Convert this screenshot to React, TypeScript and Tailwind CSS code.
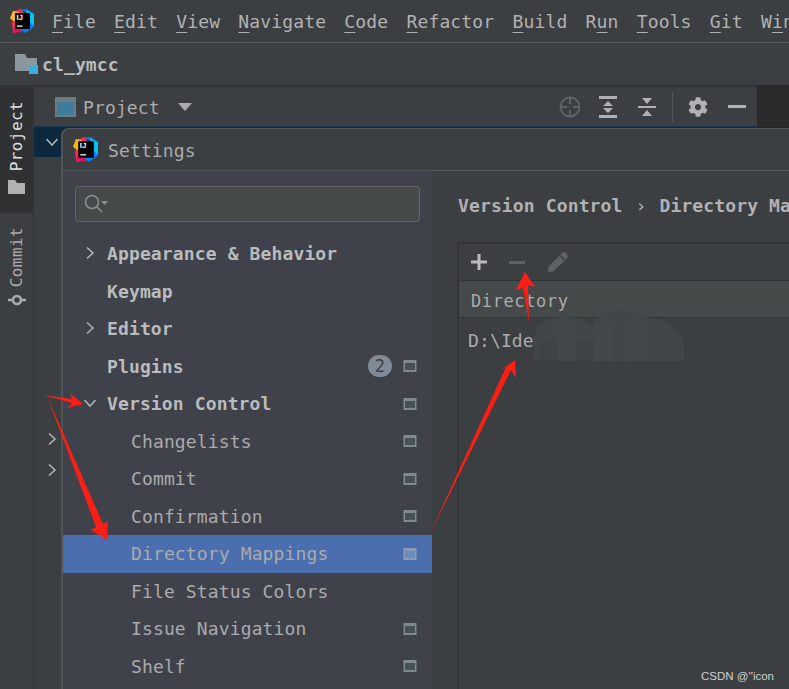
import { FaCog, FaPen } from "react-icons/fa";

const mono = "font-['DejaVu_Sans_Mono',monospace]";

const menus = [
  { label: "File", key: 0 },
  { label: "Edit", key: 0 },
  { label: "View", key: 0 },
  { label: "Navigate", key: 0 },
  { label: "Code", key: 0 },
  { label: "Refactor", key: 0 },
  { label: "Build", key: 0 },
  { label: "Run", key: 1 },
  { label: "Tools", key: 0 },
  { label: "Git", key: 0 },
  { label: "Window", key: 1 },
];

type Row = {
  label: string;
  level: 0 | 1;
  arrow?: "right" | "down";
  badge?: string;
  page?: boolean;
  selected?: boolean;
};

const rows: Row[] = [
  { label: "Appearance & Behavior", level: 0, arrow: "right" },
  { label: "Keymap", level: 0 },
  { label: "Editor", level: 0, arrow: "right" },
  { label: "Plugins", level: 0, badge: "2", page: true },
  { label: "Version Control", level: 0, arrow: "down", page: true },
  { label: "Changelists", level: 1, page: true },
  { label: "Commit", level: 1, page: true },
  { label: "Confirmation", level: 1, page: true },
  { label: "Directory Mappings", level: 1, page: true, selected: true },
  { label: "File Status Colors", level: 1 },
  { label: "Issue Navigation", level: 1, page: true },
  { label: "Shelf", level: 1, page: true },
];

const IdeaLogo = ({ size }: { size: number }) => (
  <svg width={size} height={size} viewBox="0 0 24 24" className="shrink-0">
    <polygon points="9,1 17,0 24,5 24,18 15,24 10,20 18,3" fill="#087cfa" />
    <polygon points="16,1 24,5 24,17 19,12" fill="#07c3f2" />
    <polygon points="2,3 11,0 15,6 6,14 4,12" fill="#fe2857" />
    <polygon points="0,9 3,2 9,3 5,14" fill="#fdb60d" />
    <polygon points="2,13 10,10 10,22 3,24" fill="#fe2857" />
    <polygon points="5,17 10,16 12,23 3,24" fill="#dd1265" />
    <rect x="5" y="4" width="15" height="16" fill="#000" />
    <text x="6.5" y="11" fontSize="7.5" fontWeight="700" fill="#fff" fontFamily="Liberation Sans, sans-serif">
      IJ
    </text>
    <rect x="7" y="16.5" width="5.5" height="1.2" fill="#fff" />
  </svg>
);

const PageIcon = ({ dim }: { dim?: boolean }) => (
  <svg width="14" height="12" viewBox="0 0 14 12" className="block">
    <rect x="0.5" y="0" width="13" height="12" fill={dim ? "#8b9bb5" : "#7f8b91"} />
    <rect x="2" y="3" width="10" height="7" fill={dim ? "#6b8bbd" : "#4a5058"} />
  </svg>
);

const Chevron = ({ dir }: { dir: "right" | "down" }) => (
  <svg width="14" height="14" viewBox="0 0 14 14" fill="none" stroke="#afb1b3" strokeWidth="1.6">
    {dir === "right" ? <path d="M4 1.5 10 7 4 12.5" /> : <path d="M1.5 4 7 10 12.5 4" />}
  </svg>
);

const SettingsRow = ({ row }: { row: Row }) => (
  <div
    className={`flex h-[37.5px] items-center text-[18px] tracking-[0.13px] ${row.selected ? "bg-[#4b6eaf]" : ""} ${
      row.level === 0 ? "pl-[44px]" : "pl-[68px]"
    } relative pr-[15px]`}
  >
    {row.arrow && (
      <span className="absolute left-[20px] top-[11px]">
        <Chevron dir={row.arrow} />
      </span>
    )}
    <span className={row.level === 0 ? "font-bold text-[#b9bbbd]" : "text-[#a9abad]"}>{row.label}</span>
    <span className="ml-auto flex items-center gap-[11px]">
      {row.badge && (
        <span className="flex h-[22px] w-[24px] items-center justify-center rounded-full bg-[#7f8b96] text-[17px] text-[#3c3f41]">
          {row.badge}
        </span>
      )}
      {row.page && <PageIcon dim={row.selected} />}
    </span>
  </div>
);

export default function App() {
  return (
    <div className={`relative h-[689px] w-[789px] overflow-hidden bg-[#3c3f41] ${mono}`}>
      {/* menu bar */}
      <div className="flex h-[43px] items-center overflow-hidden border-b border-[#54575a] pl-[10px] text-[18px] tracking-[0.14px] text-[#b0b2b4]">
        <IdeaLogo size={24} />
        <div className="ml-[18px] flex shrink-0 gap-[18.2px] whitespace-nowrap">
          {menus.map((m) => (
            <span key={m.label}>
              {m.label.slice(0, m.key)}
              <span className="underline underline-offset-[4px]">{m.label[m.key]}</span>
              {m.label.slice(m.key + 1)}
            </span>
          ))}
        </div>
      </div>

      {/* navigation bar */}
      <div className="flex h-[44px] items-center border-b-2 border-[#303234] pl-[15px]">
        <svg width="23" height="22" viewBox="0 0 23 22">
          <path d="M0 1h10l2 4h10v13H0z" fill="#8a979f" />
          <rect x="14" y="12" width="9" height="9" fill="#3bb0e0" />
        </svg>
        <span className="ml-[4px] text-[18px] font-bold tracking-[0.13px] text-[#b9bbbd]">cl_ymcc</span>
      </div>

      <div className="flex h-[602px]">
        {/* tool window stripe */}
        <div className="flex w-[34px] shrink-0 flex-col border-r border-[#323436] text-[16px] tracking-[0.4px]">
          <div className="flex h-[126px] flex-col items-center gap-[9px] bg-[#2f3133] pt-[14px] text-[#dfe1e3]">
            <span className="[writing-mode:vertical-rl] rotate-180 leading-none">Project</span>
            <svg width="17" height="14" viewBox="0 0 17 14">
              <path d="M0 0h7l2 3h8v11H0z" fill="#afb1b3" />
            </svg>
          </div>
          <div className="flex flex-col items-center gap-[6px] pt-[14px] text-[#a9abad]">
            <span className="[writing-mode:vertical-rl] rotate-180 leading-none">Commit</span>
            <svg width="18" height="14" viewBox="0 0 18 14" fill="none" stroke="#a9abad" strokeWidth="2.6">
              <circle cx="9" cy="7" r="4" />
              <path d="M0 7h5M13 7h5" />
            </svg>
          </div>
        </div>

        {/* project tool window */}
        <div className="flex min-w-0 flex-1 flex-col">
          <div className="flex h-[40px] shrink-0 items-center border-b border-[#1c3a50] pl-[21px]">
            <svg width="21" height="20" viewBox="0 0 21 20" className="shrink-0">
              <rect width="21" height="20" fill="#6f7b82" />
              <rect x="2" y="5" width="17" height="13" fill="#3d7d9b" />
            </svg>
            <span className="ml-[7px] translate-y-px text-[18px] tracking-[0.13px] text-[#a9abad]">Project</span>
            <svg width="14" height="8" viewBox="0 0 14 8" className="ml-[18px] shrink-0">
              <path d="M0 0h14L7 8z" fill="#a9abad" />
            </svg>
            <div className="ml-[367px] flex shrink-0 items-center">
              <svg width="22" height="22" viewBox="0 0 22 22" fill="none" stroke="#5f6264" strokeWidth="2">
                <circle cx="11" cy="11" r="9.5" />
                <path d="M11 1v7M11 14v7M1 11h7M14 11h7" />
              </svg>
              <svg width="18" height="22" viewBox="0 0 18 22" className="ml-[18px]" fill="#afb1b3">
                <rect width="18" height="3" />
                <rect y="19" width="18" height="3" />
                <path d="M9 5 14 10H4zM9 17 4 12h10z" />
              </svg>
              <svg width="18" height="20" viewBox="0 0 18 20" className="ml-[21px]" fill="#afb1b3">
                <rect y="9" width="18" height="2" />
                <path d="M4 1h10L9 7zM9 13l5 6H4z" />
              </svg>
              <div className="ml-[16px] h-[30px] w-px bg-[#54575a]" />
              <FaCog className="ml-[15px] text-[#afb1b3]" size={20} />
              <div className="ml-[20px] h-[3px] w-[18px] bg-[#afb1b3]" />
              <div className="ml-[11px] h-[42px] w-[40px] shrink-0 -translate-y-px bg-[#2b2b2b]" />
            </div>
          </div>
          <div className="flex h-[30px] shrink-0 items-center bg-[#0d293e] pl-[11px]">
            <Chevron dir="down" />
          </div>
          <div className="flex flex-col gap-[17px] pl-[11px] pt-[275px]">
            <Chevron dir="right" />
            <Chevron dir="right" />
          </div>
        </div>
      </div>

      {/* settings dialog */}
      <div className="absolute bottom-0 left-[61px] right-0 top-[128px] flex flex-col rounded-tl-[8px] border-l-2 border-t border-[#515558] bg-[#3c3f41]">
        <div className="flex h-[42px] shrink-0 items-center border-b border-[#54575a] pl-[10px]">
          <IdeaLogo size={25} />
          <span className="ml-[10px] translate-y-px text-[18px] tracking-[0.13px] text-[#a9abad]">Settings</span>
        </div>
        <div className="flex min-h-0 flex-1">
          <div className="w-[369px] shrink-0 bg-[#3f424a]">
            <div className="px-[12px] pb-[13px] pt-[15.2px]">
              <div className="flex h-[36px] items-center rounded-[3px] border border-[#646464] bg-[#45494a] pl-[8px]">
                <svg width="24" height="20" viewBox="0 0 24 20" fill="none" stroke="#8d9092" strokeWidth="1.5">
                  <circle cx="8" cy="8" r="6.5" />
                  <path d="M13 13l5 5" />
                  <path d="M17 7h7l-3.5 4z" fill="#8d9092" stroke="none" />
                </svg>
              </div>
            </div>
            {rows.map((row) => (
              <SettingsRow key={row.label} row={row} />
            ))}
          </div>

          <div className="min-w-0 flex-1 pl-[26px] pt-[24px]">
            <div className="whitespace-nowrap text-[18px] font-bold leading-[22px] tracking-[0.13px] text-[#b0b2b4]">
              Version Control <span className="px-[2px] font-normal">›</span> Directory Mappings
            </div>
            <div className="relative -ml-[1px] mt-[25px] h-[500px] w-[500px] border-l-2 border-t-2 border-[#323436]">
              <div className="flex h-[36px] items-center pl-[12px]">
                <svg width="16" height="16" viewBox="0 0 16 16" fill="#b9bbbd">
                  <path d="M6.5 0h3v6.5H16v3H9.5V16h-3V9.5H0v-3h6.5z" />
                </svg>
                <div className="ml-[22px] h-[3px] w-[16px] bg-[#5f6264]" />
                <FaPen className="ml-[23px] text-[#5f6264]" size={20} />
              </div>
              <div className="flex h-[38px] items-center border-y border-[#323436] bg-[#45494a] pl-[12px] text-[17px] tracking-[0.6px] text-[#a9abad]">
                <span className="translate-y-[3px]">Directory</span>
              </div>
              <div className="pl-[9px] pt-[12px] text-[18px] leading-[22px] tracking-[0.13px] text-[#a9abad]">D:\Ide</div>
            </div>
          </div>
        </div>
      </div>

      {/* mosaic blur over the path */}
      <svg className="absolute left-[534px] top-[311px]" width="152" height="50" viewBox="0 0 152 50">
        <path
          d="M0 50V30C0 12 14 6 30 6c14 0 22 3 28 8C64 5 74 0 86 0c12 0 22 4 30 8 18 0 34 10 34 30v12z"
          fill="#434648"
        />
        <rect x="24" y="8" width="18" height="42" fill="#45484a" />
        <rect x="42" y="30" width="18" height="20" fill="#414446" />
        <rect x="60" y="14" width="18" height="36" fill="#45484a" />
        <rect x="96" y="10" width="18" height="40" fill="#45484a" />
        <rect x="6" y="30" width="18" height="20" fill="#404345" />
      </svg>

      {/* red annotation arrows */}
      <svg className="absolute inset-0" width="789" height="689" viewBox="0 0 789 689">
        <g fill="#fb1e14">
          <polygon points="43,395 72,399 70,393 83,404 67,408 72,403" />
          <polygon points="47,396 96,527 91,530 107,540 108,521 103,524" />
          <polygon points="429,536 506,367 498,372 515,360 516,378 511,370" />
          <polygon points="529,322 523,288 516,290 525,272 535,287 528,285" />
        </g>
      </svg>

      <div className="absolute bottom-[7px] right-[15px] font-['Liberation_Sans',sans-serif] text-[11.5px] leading-none text-[#cfd0d1]">
        CSDN @''icon
      </div>
    </div>
  );
}
